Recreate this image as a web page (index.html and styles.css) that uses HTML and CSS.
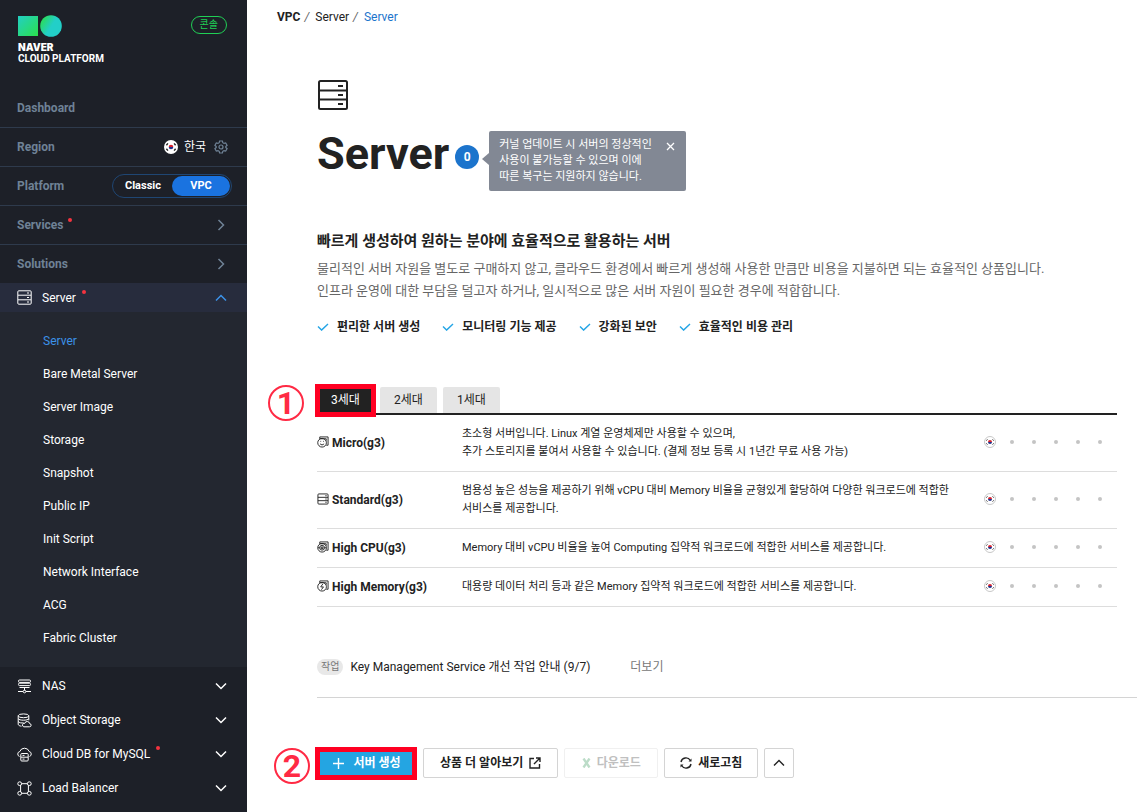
FILE: index.html
```
<!DOCTYPE html>
<html lang="ko">
<head>
    <meta charset="UTF-8">
    <meta name="viewport" content="width=device-width, initial-scale=1.0">
    <title>Server - NAVER Cloud Platform</title>

    <link rel="stylesheet" href="styles.css">
</head>
<body>
    <svg class="defs" aria-hidden="true">
        <defs>
            <linearGradient id="g1" x1="0" y1="0" x2="1" y2="1">
                <stop offset="0" stop-color="#22cfc4"/>
                <stop offset="1" stop-color="#2be04c"/>
            </linearGradient>
            <linearGradient id="g2" x1="0" y1="0.1" x2="0.8" y2="0.6">
                <stop offset="0.1" stop-color="#2bdc55"/>
                <stop offset="0.7" stop-color="#22cfc8"/>
            </linearGradient>
        </defs>
        <symbol id="korea" viewBox="0 0 14 14">
            <circle cx="7" cy="7" r="7" fill="#fff"/>
            <path d="M4.7 7a2.3 2.3 0 0 1 4.6 0z" fill="#d8232f"/>
            <path d="M4.7 7a2.3 2.3 0 0 0 4.6 0z" fill="#20318a"/>
            <path d="M2.4 5.2l1.5-1.8M10.1 3.4l1.5 1.8M2.4 8.8l1.5 1.8M10.1 10.6l1.5-1.8" stroke="#222" stroke-width="1.4"/>
        </symbol>
        <symbol id="korea_ring" viewBox="0 0 12 12">
            <circle cx="6" cy="6" r="5.5" fill="#fff" stroke="#c8c8c8"/>
            <path d="M4 6a2 2 0 0 1 4 0z" fill="#d8232f" stroke="none"/>
            <path d="M4 6a2 2 0 0 0 4 0z" fill="#20318a" stroke="none"/>
            <path d="M2.4 4.6l1-1.2M8.6 3.4l1 1.2M2.4 7.4l1 1.2M8.6 8.6l1-1.2" stroke="#333"/>
        </symbol>
        <symbol id="server" viewBox="0 0 30 30">
            <rect x="1" y="1" width="28" height="28" rx="1.5"/>
            <path d="M1 10.5h28M1 19.5h28M20 6h5M20 15h5M20 24h5"/>
        </symbol>
        <symbol id="down" viewBox="0 0 12 8"><path d="M1 1.5l5 5 5-5"/></symbol>
        <symbol id="up" viewBox="0 0 12 8"><path d="M1 6.5l5-5 5 5"/></symbol>
        <symbol id="right" viewBox="0 0 8 12"><path d="M1.5 1l5 5-5 5"/></symbol>
        <symbol id="check" viewBox="0 0 12 8"><path d="M1 3.5l3.6 3.6L11 .9"/></symbol>
    </svg>

    <div class="wrapper">
        <aside class="sidebar">
            <div class="brand">
                <a class="logo" href="#">
                    <svg width="44" height="22" viewBox="0 0 44 22">
                        <rect x="0" y="1" width="20" height="20" fill="url(#g1)"/>
                        <circle cx="33" cy="11" r="10.8" fill="url(#g2)"/>
                    </svg>
                    <span class="logo_name">NAVER</span>
                    <span class="logo_sub">CLOUD PLATFORM</span>
                </a>
                <a class="console" href="#">콘솔</a>
            </div>

            <nav>
                <div class="row"><a href="#">Dashboard</a></div>
                <div class="row">
                    <span>Region</span>
                    <div class="region">
                        <svg width="14" height="14"><use href="#korea"/></svg>
                        <span>한국</span>
                        <button class="gear" aria-label="Region settings">
                            <svg width="14" height="14" viewBox="0 0 14 14">
                                <path d="M5.6 1h2.8l.4 1.7 1.2.7 1.7-.5 1.4 2.4-1.3 1.2v1l1.3 1.2-1.4 2.4-1.7-.5-1.2.7-.4 1.7H5.6l-.4-1.7-1.2-.7-1.7.5L.9 8.7l1.3-1.2v-1L.9 5.3l1.4-2.4 1.7.5 1.2-.7z"/>
                                <circle cx="7" cy="7" r="2"/>
                            </svg>
                        </button>
                    </div>
                </div>
                <div class="row">
                    <span>Platform</span>
                    <div class="switch">
                        <button>Classic</button>
                        <button class="active">VPC</button>
                    </div>
                </div>
                <div class="row">
                    <a class="new" href="#">Services</a>
                    <svg class="arrow" width="8" height="12"><use href="#right"/></svg>
                </div>
                <div class="row">
                    <a href="#">Solutions</a>
                    <svg class="arrow" width="8" height="12"><use href="#right"/></svg>
                </div>

                <div class="group open">
                    <svg class="icon" width="15" height="15" viewBox="0 0 15 15">
                        <rect x=".8" y=".8" width="13.4" height="13.4" rx="1"/>
                        <path d="M1 5.2h13M1 9.8h13M10 3h2M10 7.5h2M10 12h2"/>
                    </svg>
                    <a class="new" href="#">Server</a>
                    <svg class="arrow" width="12" height="8"><use href="#up"/></svg>
                </div>
                <ul class="submenu">
                    <li><a class="active" href="#">Server</a></li>
                    <li><a href="#">Bare Metal Server</a></li>
                    <li><a href="#">Server Image</a></li>
                    <li><a href="#">Storage</a></li>
                    <li><a href="#">Snapshot</a></li>
                    <li><a href="#">Public IP</a></li>
                    <li><a href="#">Init Script</a></li>
                    <li><a href="#">Network Interface</a></li>
                    <li><a href="#">ACG</a></li>
                    <li><a href="#">Fabric Cluster</a></li>
                </ul>

                <div class="group">
                    <svg class="icon" width="15" height="15" viewBox="0 0 15 15">
                        <rect x="1.5" y="1" width="12" height="2.4" rx="1"/>
                        <rect x="1.5" y="4.2" width="12" height="2.4" rx="1"/>
                        <path d="M2.5 8.5h10M7.5 8.5v3M1 12.5h5M9 12.5h5"/>
                        <circle cx="7.5" cy="12.5" r="1.3"/>
                    </svg>
                    <a href="#">NAS</a>
                    <svg class="arrow" width="12" height="8"><use href="#down"/></svg>
                </div>
                <div class="group">
                    <svg class="icon" width="15" height="15" viewBox="0 0 15 15">
                        <ellipse cx="6.5" cy="2.8" rx="5.3" ry="1.9"/>
                        <path d="M1.2 2.8v8.5c0 1 1.5 1.7 3.3 1.9M11.8 2.8v4.5M1.2 5.7c1 2 9.6 2 10.6 0M1.2 8.5c1 1.4 3.3 1.6 5.5 1.4M6.8 13.8h5.6a1.6 1.6 0 0 0 .2-3.2 2.5 2.5 0 0 0-4.9-.2 1.7 1.7 0 0 0-.9 3.4z"/>
                    </svg>
                    <a href="#">Object Storage</a>
                    <svg class="arrow" width="12" height="8"><use href="#down"/></svg>
                </div>
                <div class="group">
                    <svg class="icon" width="15" height="15" viewBox="0 0 15 15">
                        <path d="M2.500 9.500A2.600 2.600 0 0 1 2.800 4.500 5 5 0 0 1 12.200 4.500 2.600 2.600 0 0 1 12.500 9.500"/>
                        <rect x="3.8" y="6.5" width="7.4" height="7.5" rx="1"/>
                        <path d="M4 10.2h7M5.5 8.4h2M5.5 12.1h2"/>
                    </svg>
                    <a class="new" href="#">Cloud DB for MySQL</a>
                    <svg class="arrow" width="12" height="8"><use href="#down"/></svg>
                </div>
                <div class="group">
                    <svg class="icon" width="15" height="15" viewBox="0 0 15 15">
                        <circle cx="2.7" cy="2.7" r="1.9"/>
                        <circle cx="12.3" cy="2.7" r="1.9"/>
                        <circle cx="2.7" cy="12.3" r="1.9"/>
                        <circle cx="12.3" cy="12.3" r="1.9"/>
                        <path d="M4.6 2.7h5.8M4.6 12.3h5.8M3.6 4.4v6.2M11.4 4.4v6.2"/>
                    </svg>
                    <a href="#">Load Balancer</a>
                    <svg class="arrow" width="12" height="8"><use href="#down"/></svg>
                </div>
            </nav>
        </aside>

        <main>
            <div class="breadcrumb">
                <b>VPC</b><i>/</i><a href="#">Server</a><i>/</i><a class="active" href="#">Server</a>
            </div>

            <section class="intro">
                <svg class="intro_icon" width="30" height="30"><use href="#server"/></svg>
                <div class="title">
                    <h1>Server</h1>
                    <span class="count">0</span>
                    <div class="tooltip">
                        <p>커널 업데이트 시 서버의 정상적인<br>사용이 불가능할 수 있으며 이에<br>따른 복구는 지원하지 않습니다.</p>
                        <button aria-label="닫기">
                            <svg width="9" height="9" viewBox="0 0 9 9"><path d="M1 1l7 7M8 1L1 8"/></svg>
                        </button>
                    </div>
                </div>
                <h2>빠르게 생성하여 원하는 분야에 효율적으로 활용하는 서버</h2>
                <p class="desc">물리적인 서버 자원을 별도로 구매하지 않고, 클라우드 환경에서 빠르게 생성해 사용한 만큼만 비용을 지불하면 되는 효율적인 상품입니다.<br>인프라 운영에 대한 부담을 덜고자 하거나, 일시적으로 많은 서버 자원이 필요한 경우에 적합합니다.</p>
                <ul class="features">
                    <li><svg width="12" height="8"><use href="#check"/></svg>편리한 서버 생성</li>
                    <li><svg width="12" height="8"><use href="#check"/></svg>모니터링 기능 제공</li>
                    <li><svg width="12" height="8"><use href="#check"/></svg>강화된 보안</li>
                    <li><svg width="12" height="8"><use href="#check"/></svg>효율적인 비용 관리</li>
                </ul>
            </section>

            <section class="types">
                <div class="tabs">
                    <div class="marked">
                        <button class="active">3세대</button>
                        <span class="step">1</span>
                    </div>
                    <button>2세대</button>
                    <button>1세대</button>
                </div>
                <table>
                    <tr>
                        <th>
                            <svg width="12" height="12" viewBox="0 0 13 13">
                                <path d="M3 3V1h9v9h-2M3 3h7v2"/>
                                <circle cx="5.5" cy="7.3" r="4.7"/>
                                <path d="M3.3 8.3c1 1.7 3.4 1.7 4.4 0M3.7 5.8h.8M6.5 5.8h.8"/>
                            </svg>
                            Micro(g3)
                        </th>
                        <td>초소형 서버입니다. Linux 계열 운영체제만 사용할 수 있으며,<br>추가 스토리지를 붙여서 사용할 수 있습니다. (결제 정보 등록 시 1년간 무료 사용 가능)</td>
                        <td class="zones"><div><svg width="12" height="12"><use href="#korea_ring"/></svg><i></i><i></i><i></i><i></i><i></i></div></td>
                    </tr>
                    <tr>
                        <th>
                            <svg width="12" height="12" viewBox="0 0 13 13">
                                <rect x="1" y="1" width="11" height="11" rx="1"/>
                                <path d="M1 4.7h11M1 8.3h11M9 3h1.5M9 6.5h1.5M9 10h1.5"/>
                            </svg>
                            Standard(g3)
                        </th>
                        <td>범용성 높은 성능을 제공하기 위해 vCPU 대비 Memory 비율을 균형있게 할당하여 다양한 워크로드에 적합한 서비스를 제공합니다.</td>
                        <td class="zones"><div><svg width="12" height="12"><use href="#korea_ring"/></svg><i></i><i></i><i></i><i></i><i></i></div></td>
                    </tr>
                    <tr>
                        <th>
                            <svg width="12" height="12" viewBox="0 0 13 13">
                                <path d="M3 3V1h9v9h-2M3 3h7v2"/>
                                <circle cx="5.5" cy="7.3" r="4.7"/>
                                <circle cx="5.5" cy="7.3" r="2.6"/>
                                <path d="M4.5 6.5h2v1.8h-2zM1 7.3h2M8 7.3h2"/>
                            </svg>
                            High CPU(g3)
                        </th>
                        <td>Memory 대비 vCPU 비율을 높여 Computing 집약적 워크로드에 적합한 서비스를 제공합니다.</td>
                        <td class="zones"><div><svg width="12" height="12"><use href="#korea_ring"/></svg><i></i><i></i><i></i><i></i><i></i></div></td>
                    </tr>
                    <tr>
                        <th>
                            <svg width="12" height="12" viewBox="0 0 13 13">
                                <path d="M3 3V1h9v9h-2M3 3h7v2"/>
                                <circle cx="5.5" cy="7.3" r="4.7"/>
                                <path d="M6.3 4.3L4 7.5h3L4.8 10.5"/>
                            </svg>
                            High Memory(g3)
                        </th>
                        <td>대용량 데이터 처리 등과 같은 Memory 집약적 워크로드에 적합한 서비스를 제공합니다.</td>
                        <td class="zones"><div><svg width="12" height="12"><use href="#korea_ring"/></svg><i></i><i></i><i></i><i></i><i></i></div></td>
                    </tr>
                </table>
            </section>

            <div class="notice">
                <span class="tag">작업</span>
                <a href="#">Key Management Service 개선 작업 안내 (9/7)</a>
                <a class="more" href="#">더보기</a>
            </div>

            <div class="actions">
                <div class="marked">
                    <button class="primary">
                        <svg width="11" height="11" viewBox="0 0 11 11"><path d="M5.5 0v11M0 5.5h11"/></svg>
                        서버 생성
                    </button>
                    <span class="step">2</span>
                </div>
                <button class="wide">
                    상품 더 알아보기
                    <svg width="12" height="12" viewBox="0 0 12 12"><path d="M5 1.5H1v9.5h9.500V7M7 1h4v4M11 1L5 7"/></svg>
                </button>
                <button disabled>
                    <svg class="excel" width="9" height="10" viewBox="0 0 9 10"><path d="M1.5 .5l6 9M7.5 .5l-6 9"/></svg>
                    다운로드
                </button>
                <button>
                    <svg width="12" height="12" viewBox="0 0 12 12">
                        <path d="M1 5a5 5 0 0 1 9.3-1.5M11 7a5 5 0 0 1-9.3 1.5"/>
                        <path d="M11.5 1.5v3h-3zM.5 10.5v-3h3z" fill="#222" stroke="none"/>
                    </svg>
                    새로고침
                </button>
                <button class="fold" aria-label="접기"><svg width="12" height="8"><use href="#up"/></svg></button>
            </div>
        </main>
    </div>
</body>
</html>
```
FILE: styles.css
```
*
{
    box-sizing: border-box;
}

body
{
    margin: 0px;
    font-family: Roboto, "Noto Sans CJK KR", sans-serif;
    font-size: 12px;
    line-height: 18px;
    color: #222222;
    background-color: #ffffff;
}

a
{
    color: inherit;
    text-decoration: none;
}

button
{
    padding: 0px;
    border: 0px;
    background: none;
    font: inherit;
    color: inherit;
    cursor: pointer;
}

h1, h2, p, ul
{
    margin: 0px;
    padding: 0px;
}

ul
{
    list-style: none;
}

svg
{
    display: block;
    flex: none;
    fill: none;
    stroke: currentColor;
}

.defs
{
    position: absolute;
    width: 0px;
    height: 0px;
}

#korea,
.logo svg
{
    stroke: none;
}

.wrapper
{
    display: flex;
    min-height: 100vh;
}

/* sidebar */

.sidebar
{
    flex: none;
    width: 247px;
    background-color: #1d2028;
    color: #ffffff;
}

.brand
{
    display: flex;
    justify-content: space-between;
    align-items: flex-start;
    height: 89px;
    padding: 15px 20px 0px 18px;
}

.logo
{
    display: flex;
    flex-direction: column;
    font-size: 10px;
    line-height: 11px;
}

.logo_name
{
    margin-top: 5px;
    font-family: Inter, sans-serif;
    font-weight: 900;
}

.logo_sub
{
    font-weight: 700;
}

.console
{
    margin-top: 1px;
    padding: 0px 8px;
    border: 1px solid #20cf55;
    border-radius: 9px;
    font-size: 10px;
    line-height: 16px;
    color: #20cf55;
}

.row
{
    display: flex;
    justify-content: space-between;
    align-items: center;
    height: 39px;
    padding: 0px 15px 0px 17px;
    border-bottom: 1px solid #2e3a4c;
    font-weight: 700;
    color: #6f8296;
}

.row:has(+ .group)
{
    height: 38px;
    border-bottom: 0px;
}

.row .arrow
{
    margin-right: 7px;
    stroke-width: 1.5;
}

.region
{
    display: flex;
    align-items: center;
    gap: 6px;
    margin-right: 4px;
    font-weight: 400;
    color: #ffffff;
}

.gear
{
    margin-left: 2px;
    color: #6f8296;
}

.gear svg
{
    stroke-width: 1.2;
}

.switch
{
    display: flex;
    width: 120px;
    height: 24px;
    padding: 1px;
    border: 1px solid #1f4673;
    border-radius: 12px;
    font-size: 11px;
    line-height: 20px;
    color: #ffffff;
}

.switch button
{
    flex: 1;
    border-radius: 10px;
    font-weight: 700;
}

.switch .active
{
    background-color: #1a73e0;
}

/* red dot after the label */

.new
{
    position: relative;
}

.new::after
{
    content: "";
    position: absolute;
    top: 2px;
    right: -8px;
    width: 4px;
    height: 4px;
    border-radius: 50%;
    background-color: #f5333f;
}

.group .new::after
{
    top: 1px;
    right: -10px;
}

.group
{
    display: flex;
    align-items: center;
    gap: 10px;
    height: 34px;
    padding: 0px 20px 0px 17px;
}

.group .arrow
{
    margin-left: auto;
    stroke-width: 1.5;
}

.group.open
{
    height: 29px;
    background-color: #272c3d;
}

.group.open .arrow
{
    color: #3c92e8;
}

.submenu
{
    margin-bottom: 2px;
    padding: 13px 0px 12px;
    background-color: #232730;
}

.submenu a
{
    display: block;
    padding-left: 43px;
    line-height: 33px;
}

.submenu .active
{
    color: #3c92e8;
}

/* content */

main
{
    flex: 1;
    min-width: 0px;
    padding-left: 70px;
}

.breadcrumb
{
    margin-left: -40px;
    padding-top: 8px;
}

.breadcrumb i
{
    margin: 0px 6px 0px 4px;
    color: #666666;
}

.breadcrumb .active
{
    color: #1c74cc;
}

.intro_icon
{
    margin: 54px 0px 0px 1px;
    stroke-width: 2;
}

.title
{
    display: flex;
    align-items: center;
    height: 60px;
    margin: 21px 0px 39px;
}

h1
{
    align-self: flex-start;
    font-size: 45px;
    line-height: 46px;
}

.count
{
    width: 24px;
    height: 24px;
    margin: 0px 10px 8px 6px;
    border-radius: 50%;
    background-color: #1c74cc;
    font-weight: 700;
    line-height: 24px;
    text-align: center;
    color: #ffffff;
}

.tooltip
{
    position: relative;
    display: flex;
    align-items: flex-start;
    gap: 14px;
    padding: 6px 11px 6px 10px;
    border-radius: 2px;
    background-color: #828894;
    font-size: 11px;
    line-height: 16px;
    color: #ffffff;
}

.tooltip::before
{
    content: "";
    position: absolute;
    left: -7px;
    top: 22px;
    border: 6px solid transparent;
    border-left-width: 0px;
    border-right: 7px solid #828894;
}

.tooltip button
{
    margin-top: 5px;
}

.tooltip svg
{
    stroke-width: 1.3;
}

h2
{
    font-size: 15px;
    line-height: 22px;
}

.desc
{
    margin: 6px 0px 16px;
    font-size: 13px;
    line-height: 22px;
    color: #666666;
}

.features
{
    display: flex;
    gap: 22px;
    font-weight: 700;
}

.features li
{
    display: flex;
    align-items: center;
    gap: 8px;
}

.features svg
{
    color: #24a5e6;
    stroke-width: 1.4;
}

.types
{
    margin: 51px 20px 0px 0px;
}

.tabs
{
    display: flex;
    gap: 6px;
    border-bottom: 2px solid #222222;
}

.tabs button
{
    width: 57px;
    height: 26px;
    border-radius: 2px 2px 0px 0px;
    background-color: #e5e5e5;
}

.tabs .active
{
    background-color: #222222;
    color: #ffffff;
}

/* red frame and step number over a control */

.marked
{
    position: relative;
}

.marked::after
{
    content: "";
    position: absolute;
    inset: -3px -2px -4px;
    border: 5px solid #ff0022;
}

.actions .marked::after
{
    inset: -1px 0px -2px -2px;
}

.step
{
    position: absolute;
    left: -49px;
    top: -2px;
    width: 36px;
    height: 36px;
    border: 2px solid #ff2a44;
    border-radius: 50%;
    font-size: 32px;
    font-weight: 700;
    line-height: 32px;
    text-align: center;
    color: #ff2a44;
}

.actions .step
{
    left: -43px;
    top: 0px;
}

table
{
    width: 100%;
    border-collapse: collapse;
}

th, td
{
    padding: 10px 0px;
    border-bottom: 1px solid #dddddd;
    text-align: left;
    word-break: keep-all;
}

th
{
    width: 145px;
}

td
{
    font-size: 11px;
}

th svg
{
    display: inline-block;
    vertical-align: -1px;
}

.zones
{
    width: 139px;
    padding-bottom: 12px;
}

.zones div
{
    display: flex;
    align-items: center;
    gap: 18px;
    padding-left: 6px;
}

.zones i
{
    width: 4px;
    height: 4px;
    border-radius: 50%;
    background-color: #c4c4c4;
}

.zones svg + i
{
    margin-left: -4px;
}

.notice
{
    display: flex;
    align-items: center;
    margin-top: 51px;
    padding-bottom: 21px;
    border-bottom: 1px solid #d4d4d4;
}

.tag
{
    margin-right: 7px;
    padding: 0px 4px;
    border-radius: 8px;
    background-color: #e8e8e8;
    font-size: 10px;
    line-height: 16px;
    color: #777777;
}

.more
{
    margin-left: 40px;
    color: #777777;
}

.actions
{
    display: flex;
    gap: 6px;
    padding: 50px 0px 34px;
}

.actions button
{
    display: flex;
    align-items: center;
    justify-content: center;
    gap: 6px;
    min-width: 94px;
    height: 30px;
    padding: 0px 15px;
    border: 1px solid #d4d4d4;
    border-radius: 2px;
    font-weight: 700;
    white-space: nowrap;
}

.actions button svg
{
    stroke-width: 1.4;
}

.actions .wide
{
    padding: 0px 16px;
}

.actions .primary
{
    gap: 9px;
    width: 100px;
    border: 0px;
    background-color: #24a5e2;
    color: #ffffff;
}

.actions button:disabled
{
    border-color: #f0f0f0;
    color: #c0c0c0;
}

.actions .excel
{
    color: #bcdcc8;
    stroke-width: 2.4;
}

.actions .fold
{
    min-width: 30px;
    padding: 0px;
}
```
